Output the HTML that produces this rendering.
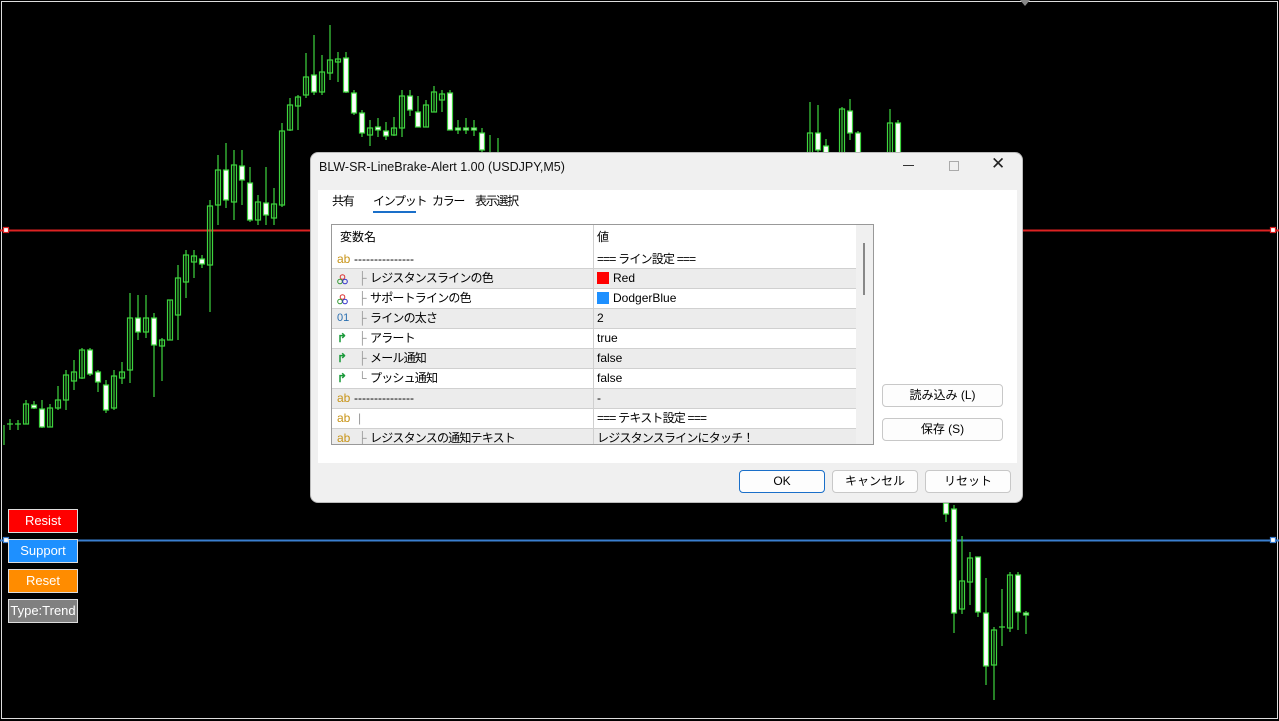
<!DOCTYPE html>
<html><head><meta charset="utf-8"><style>
*{box-sizing:border-box;margin:0;padding:0}
body{width:1279px;height:721px;background:#000;overflow:hidden;position:relative;font-family:"Liberation Sans","Noto Sans CJK JP",sans-serif;font-size:12px;color:#000}
.abs{position:absolute}
.dlg{left:310px;top:152px;width:713px;height:351px;background:#f0f0f0;border-radius:8px;border:1px solid #bbb}
.title{left:8px;top:7px;font-size:12.5px;color:#111}
.panel{left:7px;top:37px;width:699px;height:273px;background:#fff}
.tab{top:40px;font-size:12px;letter-spacing:-1.3px;line-height:16px}
.tbl{left:20px;top:71px;width:543px;height:221px;border:1px solid #999;background:#fff;overflow:hidden}
.row{position:absolute;left:0;width:524px;height:20px;border-bottom:1px solid #d0d0d0}
.row.g{background:#ececec}
.row span{position:absolute;top:2px;white-space:nowrap;line-height:15px}
.c2{left:265px}
.div{position:absolute;left:261px;top:0;width:1px;height:221px;background:#d0d0d0}
.btn{position:absolute;height:23px;border:1px solid #c8c8c8;border-radius:4px;background:#fdfdfd;text-align:center;line-height:21px;font-size:12px}
.ab{color:#c89418;left:5px}
.ic{left:5px}
.jp{letter-spacing:-0.8px}
.cb{position:absolute;left:8px;width:70px;height:24px;border:1px solid #ddd;color:#fff;text-align:center;line-height:22px;font-size:13px}
</style></head><body>
<div class="abs" style="left:1px;top:1px;width:1277px;height:718px;border:1px solid #ddd"></div>
<svg class="abs" style="left:0;top:0" width="1279" height="721" stroke="#3ed43e" stroke-width="1.2">
<line x1="0" y1="230.5" x2="1279" y2="230.5" stroke="#d22" stroke-width="2"/>
<line x1="0" y1="540.5" x2="1279" y2="540.5" stroke="#3a7fd0" stroke-width="2"/>
<rect x="3.5" y="227.5" width="5" height="5" fill="#fff" stroke="#d22"/><rect x="1270.5" y="227.5" width="5" height="5" fill="#fff" stroke="#d22"/>
<rect x="3.5" y="537.5" width="5" height="5" fill="#fff" stroke="#3a7fd0"/><rect x="1270.5" y="537.5" width="5" height="5" fill="#fff" stroke="#3a7fd0"/>
<path d="M1020 0l5 6l5-6z" fill="#888" stroke="none"/>
<g fill="none">
<path d="M4 425V445M10 419V430M7 424H13M18 420V430M15 424H21M26 400V424M34 401V409M42 400V428M50 404V427M58 386V410M66 370V410M74 360V390M82 348V379M90 348V376M98 370V392M106 380V413M114 370V410M122 362V384M130 293V383M138 295V340M146 295V338M154 313V397M162 338V381M170 300V340M178 265V340M186 250V298M194 250V278M202 255V268M210 200V312M218 155V225M226 143V208M234 150V220M242 150V205M250 167V222M258 195V225M266 167V225M274 188V225M282 123V207M290 98V131M298 95V130M306 53V98M314 35V95M322 55V95M330 25V80M338 52V82M346 52V93M354 90V115M362 110V137M370 120V146M378 118V137M386 122V140M394 117V136M402 90V137M410 90V116M418 96V127M426 100V127M434 86V112M442 90V112M450 90V130M458 120V134M466 118V134M474 120V136M482 128V152M490 135V152M498 138V152"/>
<path d="M810 102V160M818 105V155M826 139V155M842 107V160M850 99V140M858 131V160M890 109V160M898 120V160M946 500V522M954 505V633M962 536V614M970 552V605M978 557V617M986 578V685M994 627V700M1002 589V646M999 627H1005M1010 572V632M1018 572V630M1026 611V634"/>
</g>
<g fill="none">
<rect x="23.5" y="404" width="5" height="20"/><rect x="47.5" y="408" width="5" height="19"/><rect x="55.5" y="400" width="5" height="8"/><rect x="63.5" y="375" width="5" height="25"/><rect x="71.5" y="372" width="5" height="9"/><rect x="79.5" y="350" width="5" height="28"/><rect x="111.5" y="376" width="5" height="32"/><rect x="119.5" y="372" width="5" height="6"/><rect x="127.5" y="318" width="5" height="52"/><rect x="143.5" y="318" width="5" height="14"/><rect x="159.5" y="340" width="5" height="6"/><rect x="167.5" y="300" width="5" height="40"/><rect x="175.5" y="278" width="5" height="37"/><rect x="183.5" y="255" width="5" height="27"/><rect x="191.5" y="256" width="5" height="6"/><rect x="207.5" y="206" width="5" height="59"/><rect x="215.5" y="170" width="5" height="35"/><rect x="231.5" y="165" width="5" height="37"/><rect x="255.5" y="202" width="5" height="18"/><rect x="271.5" y="204" width="5" height="14"/><rect x="279.5" y="131" width="5" height="74"/><rect x="287.5" y="105" width="5" height="25"/><rect x="295.5" y="97" width="5" height="9"/><rect x="303.5" y="77" width="5" height="18"/><rect x="319.5" y="72" width="5" height="20"/><rect x="327.5" y="60" width="5" height="13"/><rect x="335.5" y="59" width="5" height="3"/><rect x="367.5" y="128" width="5" height="7"/><rect x="391.5" y="128" width="5" height="7"/><rect x="399.5" y="96" width="5" height="32"/><rect x="423.5" y="105" width="5" height="22"/><rect x="431.5" y="92" width="5" height="20"/><rect x="439.5" y="94" width="5" height="6"/>
<rect x="807.5" y="133" width="5" height="27"/><rect x="839.5" y="109" width="5" height="51"/><rect x="887.5" y="123" width="5" height="37"/><rect x="959.5" y="581" width="5" height="28"/><rect x="967.5" y="558" width="5" height="24"/><rect x="991.5" y="630" width="5" height="35"/><rect x="1007.5" y="575" width="5" height="53"/>
</g>
<g fill="#fff">
<rect x="31.5" y="405" width="5" height="3"/><rect x="39.5" y="409" width="5" height="18"/><rect x="87.5" y="350" width="5" height="24"/><rect x="95.5" y="372" width="5" height="10"/><rect x="103.5" y="385" width="5" height="25"/><rect x="135.5" y="318" width="5" height="14"/><rect x="151.5" y="318" width="5" height="27"/><rect x="199.5" y="259" width="5" height="5"/><rect x="223.5" y="170" width="5" height="30"/><rect x="239.5" y="166" width="5" height="14"/><rect x="247.5" y="183" width="5" height="37"/><rect x="263.5" y="203" width="5" height="12"/><rect x="311.5" y="75" width="5" height="17"/><rect x="343.5" y="58" width="5" height="34"/><rect x="351.5" y="93" width="5" height="20"/><rect x="359.5" y="113" width="5" height="20"/><rect x="375.5" y="127" width="5" height="3"/><rect x="383.5" y="131" width="5" height="5"/><rect x="407.5" y="96" width="5" height="14"/><rect x="415.5" y="112" width="5" height="15"/><rect x="447.5" y="93" width="5" height="37"/><rect x="455.5" y="128" width="5" height="2"/><rect x="463.5" y="128" width="5" height="2"/><rect x="471.5" y="128" width="5" height="2"/><rect x="479.5" y="133" width="5" height="17"/>
<rect x="815.5" y="133" width="5" height="17"/><rect x="823.5" y="146" width="5" height="9"/><rect x="847.5" y="111" width="5" height="22"/><rect x="855.5" y="133" width="5" height="27"/><rect x="895.5" y="123" width="5" height="37"/><rect x="943.5" y="503" width="5" height="11"/><rect x="951.5" y="509" width="5" height="104"/><rect x="975.5" y="557" width="5" height="55"/><rect x="983.5" y="613" width="5" height="53"/><rect x="1015.5" y="575" width="5" height="37"/><rect x="1023.5" y="613" width="5" height="2"/>
</g>
</svg>
<div class="cb" style="top:509px;background:#ff0000">Resist</div>
<div class="cb" style="top:539px;background:#1e90ff">Support</div>
<div class="cb" style="top:569px;background:#ff8c00">Reset</div>
<div class="cb" style="top:599px;background:#808080">Type:Trend</div>

<div class="abs dlg">
<div class="abs title">BLW-SR-LineBrake-Alert 1.00 (USDJPY,M5)</div>
<div class="abs" style="left:592px;top:12px;width:11px;border-top:1px solid #333"></div>
<div class="abs" style="left:638px;top:8px;width:10px;height:10px;border:1px solid #aaa"></div>
<div class="abs" style="left:680px;top:1px;font-size:17px;color:#222">✕</div>
<div class="abs panel"></div>
<div class="abs tab" style="left:21px">共有</div>
<div class="abs tab" style="left:62px">インプット</div>
<div class="abs" style="left:62px;top:58px;width:43px;height:2px;background:#1a6fc9"></div>
<div class="abs tab" style="left:121px">カラー</div>
<div class="abs tab" style="left:164px">表示選択</div>
<div class="abs tbl">
 <div class="row" style="top:0;height:25px;border:none"><span style="left:8px;top:5px">変数名</span><span class="c2" style="top:5px">値</span></div>
 <div class="row" style="top:25px;height:19px"><span class="ab">ab</span><span style="left:22px">---------------</span><span class="c2 jp">=== ライン設定 ===</span></div>
 <div class="row g" style="top:44px"><svg class="abs" style="left:5px;top:5px" width="11" height="11"><circle cx="5.5" cy="3" r="2.3" fill="none" stroke="#d33"/><circle cx="3" cy="7.5" r="2.3" fill="none" stroke="#393"/><circle cx="8" cy="7.5" r="2.3" fill="none" stroke="#33c"/></svg><span style="left:26px;color:#999">├</span><span class="jp" style="left:38px">レジスタンスラインの色</span><span class="c2"><b style="display:inline-block;width:12px;height:12px;background:#f00;vertical-align:-2px;margin-right:4px"></b>Red</span></div>
 <div class="row" style="top:64px"><svg class="abs" style="left:5px;top:5px" width="11" height="11"><circle cx="5.5" cy="3" r="2.3" fill="none" stroke="#d33"/><circle cx="3" cy="7.5" r="2.3" fill="none" stroke="#393"/><circle cx="8" cy="7.5" r="2.3" fill="none" stroke="#33c"/></svg><span style="left:26px;color:#999">├</span><span class="jp" style="left:38px">サポートラインの色</span><span class="c2"><b style="display:inline-block;width:12px;height:12px;background:#1e90ff;vertical-align:-2px;margin-right:4px"></b>DodgerBlue</span></div>
 <div class="row g" style="top:84px"><span class="ic" style="color:#2a6fb0;font-size:11px">01</span><span style="left:26px;color:#999">├</span><span class="jp" style="left:38px">ラインの太さ</span><span class="c2">2</span></div>
 <div class="row" style="top:104px"><span class="ic" style="color:#1a9a3a;font-weight:bold">↱</span><span style="left:26px;color:#999">├</span><span class="jp" style="left:38px">アラート</span><span class="c2">true</span></div>
 <div class="row g" style="top:124px"><span class="ic" style="color:#1a9a3a;font-weight:bold">↱</span><span style="left:26px;color:#999">├</span><span class="jp" style="left:38px">メール通知</span><span class="c2">false</span></div>
 <div class="row" style="top:144px"><span class="ic" style="color:#1a9a3a;font-weight:bold">↱</span><span style="left:26px;color:#999">└</span><span class="jp" style="left:38px">プッシュ通知</span><span class="c2">false</span></div>
 <div class="row g" style="top:164px"><span class="ab">ab</span><span style="left:22px">---------------</span><span class="c2">-</span></div>
 <div class="row" style="top:184px"><span class="ab">ab</span><span style="left:26px;color:#999">|</span><span class="c2 jp">=== テキスト設定 ===</span></div>
 <div class="row g" style="top:204px"><span class="ab">ab</span><span style="left:26px;color:#999">├</span><span class="jp" style="left:38px">レジスタンスの通知テキスト</span><span class="c2 jp">レジスタンスラインにタッチ！</span></div>
 <div class="div"></div>
 <div class="abs" style="left:524px;top:0;width:17px;height:219px;background:#f0f0f0"></div>
 <div class="abs" style="left:531px;top:18px;width:2px;height:52px;background:#888"></div>
</div>
<div class="btn" style="left:571px;top:231px;width:121px">読み込み (L)</div>
<div class="btn" style="left:571px;top:265px;width:121px">保存 (S)</div>
<div class="btn" style="left:428px;top:317px;width:86px;border:1px solid #1a6fc9">OK</div>
<div class="btn" style="left:521px;top:317px;width:86px">キャンセル</div>
<div class="btn" style="left:614px;top:317px;width:86px">リセット</div>
</div>
</body></html>
